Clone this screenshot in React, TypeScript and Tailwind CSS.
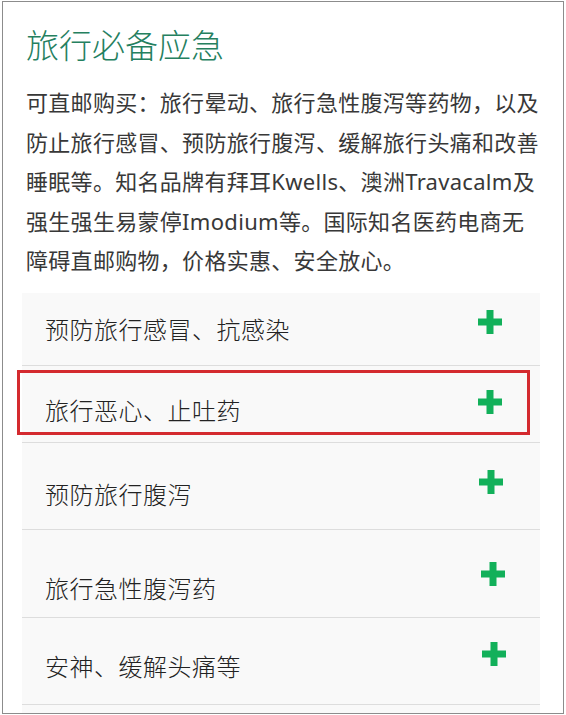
import React from "react";

function Plus() {
  return (
    <svg width="24" height="24" viewBox="0 0 24 24" className="block shrink-0">
      <rect x="8.5" y="0" width="7" height="24" fill="#12b05a" />
      <rect x="0" y="8.5" width="24" height="7" fill="#12b05a" />
    </svg>
  );
}

type Item = { label: string; h: string; tp: string; pp: string; mr: string };

const items: Item[] = [
  { label: "预防旅行感冒、抗感染", h: "h-[73px]", tp: "pt-[21px]", pp: "mt-[17px]", mr: "mr-[38px]" },
  { label: "旅行恶心、止吐药", h: "h-[77px]", tp: "pt-[29px]", pp: "mt-[24px]", mr: "mr-[38px]" },
  { label: "预防旅行腹泻", h: "h-[87px]", tp: "pt-[36px]", pp: "mt-[27px]", mr: "mr-[37px]" },
  { label: "旅行急性腹泻药", h: "h-[88px]", tp: "pt-[43px]", pp: "mt-[32px]", mr: "mr-[35px]" },
  { label: "安神、缓解头痛等", h: "h-[87px]", tp: "pt-[33px]", pp: "mt-[24px]", mr: "mr-[34px]" },
];

export default function App() {
  return (
    <div className="w-[566px] h-[715px] bg-white pl-[2px] pt-[1px] font-['Noto_Sans','Noto_Sans_CJK_SC',sans-serif]">
      <div className="relative w-[562px] h-[713px] border border-[#8c8c8c] overflow-hidden bg-white">
        <h1 className="pl-[23px] pt-[24px] text-[33px] leading-[40px] font-light text-[#25805f]">
          旅行必备应急
        </h1>
        <p className="mt-[17px] pl-[23px] text-[22px] leading-[39.5px] tracking-[0.3px] text-[#383838]">
          可直邮购买：旅行晕动、旅行急性腹泻等药物，以及
          <br />
          防止旅行感冒、预防旅行腹泻、缓解旅行头痛和改善
          <br />
          睡眠等。知名品牌有拜耳Kwells、澳洲Travacalm及
          <br />
          强生强生易蒙停Imodium等。国际知名医药电商无
          <br />
          障碍直邮购物，价格实惠、安全放心。
        </p>
        <div className="mt-[12px] ml-[19px] w-[518px]">
          {items.map((it) => (
            <div
              key={it.label}
              className={`flex justify-between bg-[#f9f9f9] border-b border-[#dddddd] ${it.h}`}
            >
              <div className={`pl-[23px] text-[24px] leading-[32px] tracking-[0.5px] font-light text-[#222222] ${it.tp}`}>
                {it.label}
              </div>
              <div className={`${it.pp} ${it.mr}`}>
                <Plus />
              </div>
            </div>
          ))}
          <div className="h-[20px] bg-[#f9f9f9]" />
        </div>
        <div className="absolute left-[14px] top-[368px] w-[513px] h-[65px] border-[3px] border-[#d42a2f]" />
      </div>
    </div>
  );
}
